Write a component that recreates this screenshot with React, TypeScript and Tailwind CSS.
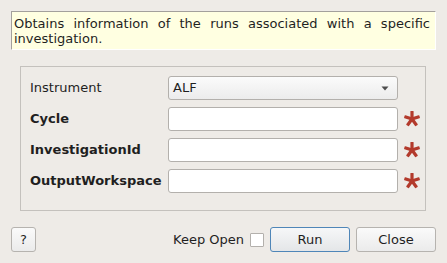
import React from "react";

function Star() {
  return (
    <svg width="16" height="16" viewBox="-8 -8 16 16" className="ml-[6px] shrink-0">
      {[0, 72, 144, 216, 288].map((a) => (
        <rect key={a} x={-1.6} y={-8} width={3.2} height={8} rx={0.6} fill="#b33a2c" transform={`rotate(${a})`} />
      ))}
      <circle cx="0" cy="0" r="2.2" fill="#b33a2c" />
    </svg>
  );
}

function Row({ label, bold, children, star }: { label: string; bold?: boolean; children: React.ReactNode; star?: boolean }) {
  return (
    <div className="flex items-center h-[24px]">
      <div className={`w-[138px] shrink-0 ${bold ? "font-bold" : ""}`}>{label}</div>
      {children}
      {star && <Star />}
    </div>
  );
}

function TextBox() {
  return <div className="w-[230px] h-[24px] bg-white border border-[#b3b0ac] rounded-[3px] shrink-0" />;
}

export default function App() {
  return (
    <div className="w-[447px] h-[263px] bg-[#eeebe7] font-['DejaVu_Sans',sans-serif] text-[13px] text-[#1f1f1f] flex flex-col pt-[11px] px-[11px] overflow-hidden">
      <div className="h-[39px] bg-[#ffffe1] border-t border-l border-t-[#a3a09c] border-l-[#a3a09c] border-r border-b border-r-white border-b-white pl-[2px] pr-[5px] pt-[4px] leading-[15px] text-justify">
        Obtains information of the runs associated with a specific investigation.
      </div>
      <div className="mt-[16px] ml-[9px] w-[406px] h-[145px] border border-[#c4c1bd] pt-[9px] pl-[9px] flex flex-col gap-[7px]">
        <Row label="Instrument">
          <div className="w-[230px] h-[24px] border border-[#b3b0ac] rounded-[3px] bg-gradient-to-b from-[#fbfbfb] to-[#ececec] flex items-center pl-[4px] pr-[8px] shrink-0">
            <span className="flex-1">ALF</span>
            <svg width="8" height="5" viewBox="0 0 8 5">
              <path d="M0.5 0.5 L7.5 0.5 L4 4.5 Z" fill="#4d4d4d" />
            </svg>
          </div>
        </Row>
        <Row label="Cycle" bold star>
          <TextBox />
        </Row>
        <Row label="InvestigationId" bold star>
          <TextBox />
        </Row>
        <Row label="OutputWorkspace" bold star>
          <TextBox />
        </Row>
      </div>
      <div className="mt-[16px] h-[25px] flex items-center">
        <button className="w-[25px] h-[25px] border border-[#b6b3af] rounded-[3px] bg-gradient-to-b from-[#fafafa] to-[#ebebeb] flex items-center justify-center">?</button>
        <div className="flex-1" />
        <span>Keep Open</span>
        <div className="ml-[6px] w-[14px] h-[14px] bg-white border border-[#b3b0ac] rounded-[1px]" />
        <button className="ml-[6px] w-[80px] h-[25px] border border-[#4f86b8] rounded-[3px] bg-gradient-to-b from-[#f6f7f8] to-[#e4e6e8] flex items-center justify-center">Run</button>
        <button className="ml-[6px] w-[80px] h-[25px] border border-[#b6b3af] rounded-[3px] bg-gradient-to-b from-[#fafafa] to-[#ebebeb] flex items-center justify-center">Close</button>
      </div>
    </div>
  );
}
